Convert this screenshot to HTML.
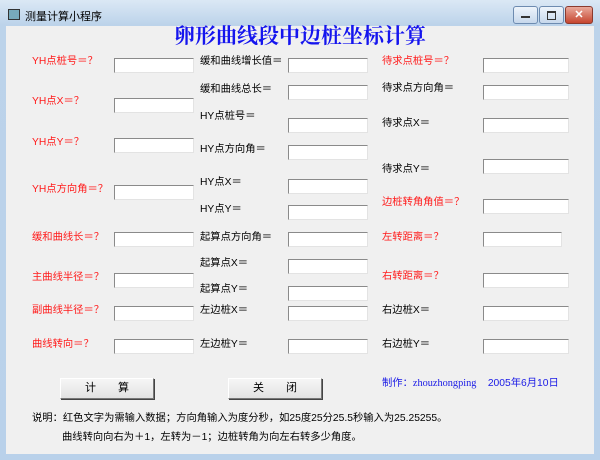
<!DOCTYPE html>
<html><head><meta charset="utf-8"><style>
body{margin:0;width:600px;height:460px;overflow:hidden;background:#b9d1ea;font-family:"Liberation Sans","Noto Sans CJK SC",sans-serif;font-size:10.3px;}
#win{position:absolute;left:0;top:0;width:600px;height:460px;background:linear-gradient(#dbe8f5,#bcd3ea 25px,#b9d1ea);}
#client{position:absolute;left:6px;top:26px;width:588px;height:428px;background:#f0f0f0;}
.ttl{position:absolute;left:25px;top:8px;font-size:11px;color:#000;}
.l{position:absolute;white-space:nowrap;line-height:14px;color:#000;}
.r{color:#ff1a1a;}
.i{position:absolute;width:78px;height:13px;background:#fff;border-top:1px solid #8a8a8a;border-left:1px solid #8a8a8a;border-right:1px solid #e3e3e3;border-bottom:1px solid #e3e3e3;}
.b{position:absolute;width:92px;height:19px;background:linear-gradient(#f6f6f6,#e2e2e2);border:1px solid #fff;border-right-color:#777;border-bottom-color:#777;box-shadow:1px 1px 0 #444;text-align:center;line-height:19px;font-size:11px;}
.wb{position:absolute;top:6px;height:16px;border:1px solid #6d8bb0;border-radius:3px;background:linear-gradient(#eef4fb,#c7d8ec);}
</style></head><body><div id="win">
<div style="position:absolute;left:8px;top:9px;width:10px;height:9px;border:1px solid #333;background:#7ab;"></div>
<div class="ttl">测量计算小程序</div>
<div class="wb" style="left:513px;width:23px;"><div style="position:absolute;left:7px;top:9px;width:9px;height:2px;background:#333"></div></div>
<div class="wb" style="left:539px;width:23px;"><div style="position:absolute;left:7px;top:4px;width:7px;height:6px;border:1px solid #333;border-top-width:2px"></div></div>
<div class="wb" style="left:565px;width:26px;background:linear-gradient(#e9a99b,#c6452f);border-color:#8b3a2e;color:#fff;text-align:center;font-weight:bold;line-height:16px;font-size:11px">✕</div>
</div>
<div id="client"></div>
<div class="l" style="left:0;width:600px;text-align:center;top:22px;font-size:21px;line-height:26px;font-weight:bold;color:#1515ee;font-family:'Noto Serif CJK SC',serif;">卵形曲线段中边桩坐标计算</div>

<div class="l r" style="left:32px;top:55px">YH点桩号＝？</div>
<div class="l r" style="left:32px;top:95px">YH点X＝？</div>
<div class="l r" style="left:32px;top:136px">YH点Y＝？</div>
<div class="l r" style="left:32px;top:183px">YH点方向角＝？</div>
<div class="l r" style="left:32px;top:231px">缓和曲线长＝？</div>
<div class="l r" style="left:32px;top:271px">主曲线半径＝？</div>
<div class="l r" style="left:32px;top:304px">副曲线半径＝？</div>
<div class="l r" style="left:32px;top:338px">曲线转向＝？</div>
<div class="i" style="left:114px;top:58px"></div>
<div class="i" style="left:114px;top:98px"></div>
<div class="i" style="left:114px;top:138px"></div>
<div class="i" style="left:114px;top:185px"></div>
<div class="i" style="left:114px;top:232px"></div>
<div class="i" style="left:114px;top:273px"></div>
<div class="i" style="left:114px;top:306px"></div>
<div class="i" style="left:114px;top:339px"></div>

<div class="l" style="left:200px;top:55px">缓和曲线增长值＝</div>
<div class="l" style="left:200px;top:83px">缓和曲线总长＝</div>
<div class="l" style="left:200px;top:110px">HY点桩号＝</div>
<div class="l" style="left:200px;top:143px">HY点方向角＝</div>
<div class="l" style="left:200px;top:176px">HY点X＝</div>
<div class="l" style="left:200px;top:203px">HY点Y＝</div>
<div class="l" style="left:200px;top:231px">起算点方向角＝</div>
<div class="l" style="left:200px;top:257px">起算点X＝</div>
<div class="l" style="left:200px;top:283px">起算点Y＝</div>
<div class="l" style="left:200px;top:304px">左边桩X＝</div>
<div class="l" style="left:200px;top:338px">左边桩Y＝</div>
<div class="i" style="left:288px;top:58px"></div>
<div class="i" style="left:288px;top:85px"></div>
<div class="i" style="left:288px;top:118px"></div>
<div class="i" style="left:288px;top:145px"></div>
<div class="i" style="left:288px;top:179px"></div>
<div class="i" style="left:288px;top:205px"></div>
<div class="i" style="left:288px;top:232px"></div>
<div class="i" style="left:288px;top:259px"></div>
<div class="i" style="left:288px;top:286px"></div>
<div class="i" style="left:288px;top:306px"></div>
<div class="i" style="left:288px;top:339px"></div>

<div class="l r" style="left:382px;top:55px">待求点桩号＝？</div>
<div class="l" style="left:382px;top:82px">待求点方向角＝</div>
<div class="l" style="left:382px;top:117px">待求点X＝</div>
<div class="l" style="left:382px;top:163px">待求点Y＝</div>
<div class="l r" style="left:382px;top:196px">边桩转角角值＝？</div>
<div class="l r" style="left:382px;top:231px">左转距离＝？</div>
<div class="l r" style="left:382px;top:270px">右转距离＝？</div>
<div class="l" style="left:382px;top:304px">右边桩X＝</div>
<div class="l" style="left:382px;top:338px">右边桩Y＝</div>
<div class="i" style="left:483px;top:58px;width:84px"></div>
<div class="i" style="left:483px;top:85px;width:84px"></div>
<div class="i" style="left:483px;top:118px;width:84px"></div>
<div class="i" style="left:483px;top:159px;width:84px"></div>
<div class="i" style="left:483px;top:199px;width:84px"></div>
<div class="i" style="left:483px;top:232px;width:77px"></div>
<div class="i" style="left:483px;top:273px;width:84px"></div>
<div class="i" style="left:483px;top:306px;width:84px"></div>
<div class="i" style="left:483px;top:339px;width:84px"></div>

<div class="b" style="left:60px;top:378px">计　　算</div>
<div class="b" style="left:228px;top:378px">关　　闭</div>
<div class="l" style="left:382px;top:377px;color:#1a1ae6">制作：<span style="font-family:'Liberation Serif',serif">zhouzhongping</span>&nbsp;&nbsp;&nbsp;&nbsp;2005年6月10日</div>
<div class="l" style="left:32px;top:412px">说明：红色文字为需输入数据；方向角输入为度分秒，如25度25分25.5秒输入为25.25255。</div>
<div class="l" style="left:62px;top:431px">曲线转向向右为＋1，左转为－1；边桩转角为向左右转多少角度。</div>
</body></html>
